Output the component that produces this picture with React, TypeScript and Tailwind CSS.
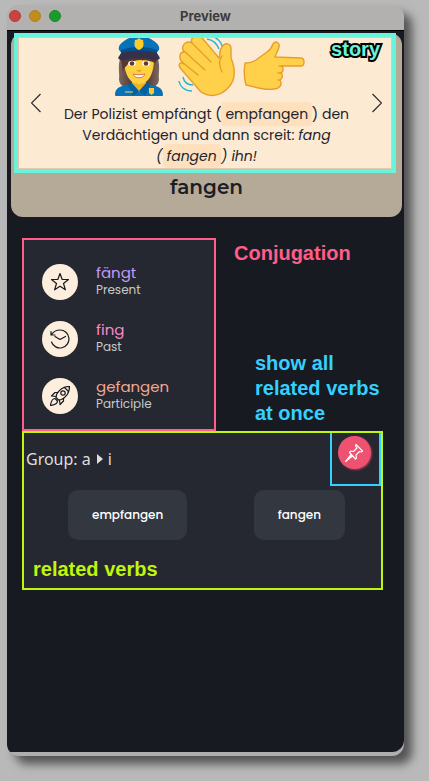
import React from "react";

const appFont = "font-['Poppins','Inter','Liberation_Sans',sans-serif]";
const noteFont = "font-['Liberation_Sans',Arial,sans-serif]";

function Policewoman() {
  return (
    <svg className="h-[60px] w-16 shrink-0" viewBox="-8 0 64 60" aria-label="police officer">
      <defs>
        <linearGradient id="hair" x1="0" x2="1">
          <stop offset="0" stopColor="#806861" />
          <stop offset=".25" stopColor="#5b443d" />
          <stop offset=".75" stopColor="#5b443d" />
          <stop offset="1" stopColor="#806861" />
        </linearGradient>
      </defs>
      <path d="M6 18C2 28 5 36 4 41c0 6 5 9 11 9h18c6 0 11-3 11-9-1-5 2-13-2-23z" fill="url(#hair)" />
      <path d="M17 40h14v9l-7 6-7-6z" fill="#f0b323" />
      <path d="M0 57c0-8 6-9 16-11l8 8 8-8c10 2 16 3 16 11 0 1-1 1-2 1H2c-1 0-2 0-2-1z" fill="#0872b8" />
      <path d="M16 44l8 9-6 5-5-11zM32 44l-8 9 6 5 5-11z" fill="#02609e" />
      <path d="M9 20c0 15 5 26 15 26s15-11 15-26z" fill="#ffd03f" />
      <path d="M6 20h36c0 3-2 7-4 4-8-3-20-3-25 2-2 3-5 4-5 8z" fill="#543930" />
      <path d="M4 9C4 6 13-2 24-2s20 8 20 11c1 3-1 4-3 6-10-4-24-4-34 0-2-2-4-3-3-6z" fill="#0872b8" />
      <path d="M6 12c10-4 26-4 36 0v4H6z" fill="#02508e" />
      <path d="M6 15c10-3 26-3 36 0l3 5c-3 4-6 2-10 1-7-1-15-1-22 0-4 1-7 3-10-1z" fill="#35314b" />
      <path d="M20 2c2 0 3-1 4-2 1 1 2 2 4 2 1 5 1 8-4 10-5-2-5-5-4-10z" fill="#ffcb28" />
      <path d="M14 22q4-2 7 0M27 22q3-2 7 0" fill="none" stroke="#543930" strokeWidth="1.2" />
      <ellipse cx="17" cy="25.500" rx="3.800" ry="2.800" fill="#fff" />
      <ellipse cx="31" cy="25.500" rx="3.800" ry="2.800" fill="#fff" />
      <circle cx="17" cy="25.500" r="2.300" fill="#5c3b37" />
      <circle cx="31" cy="25.500" r="2.300" fill="#5c3b37" />
      <path d="M22 32q2 2 4 0" fill="none" stroke="#e2a41d" strokeWidth="1.5" />
      <path d="M18 36c4 1 8 1 12 0-1 5-11 5-12 0z" fill="#fff" stroke="#d06a45" strokeWidth=".9" />
      <path d="M10 54h8" stroke="#ffd64a" strokeWidth="1.2" />
      <path d="M34 50h5v5l-2.500 2-2.500-2z" fill="#ffcb28" />
    </svg>
  );
}

function WavingHand() {
  return (
    <svg className="h-[60px] w-16 shrink-0" viewBox="0 0 64 60" aria-label="waving hand">
      <path
        d="M17 5C14-1 23-4 28 1l16 19c2-3-1-6 3-11 3-5 9-4 9 2v9c5 12 4 22-2 29-8 9-19 11-28 5L6 31c-4-5 0-8 3-5-6-5-5-12 0-12-4-6 2-12 8-9z"
        fill="#ffd04a"
        stroke="#e69f2b"
        strokeWidth="1.4"
        strokeLinejoin="round"
      />
      <path d="M17 5l19 19M9 13l21 19M7 24l16 13M47 18c-4 5-3 10 0 16" stroke="#e69f2b" strokeWidth="1.4" fill="none" strokeLinecap="round" />
      <path d="M8 39c1 5 5 8 10 8M4 43c1 6 6 10 13 10M32 1c6 1 10 5 12 10M39-1c4 2 7 5 8 9" fill="none" stroke="#1fb8d8" strokeWidth="1.4" />
    </svg>
  );
}

function PointingHand() {
  return (
    <svg className="h-[60px] w-16 shrink-0" viewBox="0 0 64 60" aria-label="pointing right">
      <path
        d="M2 25c5 0 8-1 11-3l11-8c3-2 5-5 6-8 3-4 7-1 6 3-1 4-3 7-4 10l26 1c4 0 4 8 0 8H39c2 3 1 6-1 7 2 2 2 5-1 7 3 5-1 9-6 9-9 2-18-2-28-4-2-7-2-16-1-22z"
        fill="#ffd04a"
        stroke="#e69f2b"
        strokeWidth="1.4"
        strokeLinejoin="round"
      />
      <path d="M39 28h-3M38 35h-3M37 42h-2" stroke="#e69f2b" strokeWidth="1.4" strokeLinecap="round" />
    </svg>
  );
}

const line = { fill: "none", stroke: "#171a21", strokeWidth: 1.2, strokeLinejoin: "round" as const, strokeLinecap: "round" as const };

function Star() {
  return (
    <svg className="h-5 w-5" viewBox="0 0 20 20" {...line}>
      <path d="M10 1.500l2.200 6h6.300l-5 4 1.900 6.300-5.400-3.600-5.400 3.600 1.900-6.300-5-4h6.300z" />
    </svg>
  );
}

function History() {
  return (
    <svg className="h-5 w-5" viewBox="0 0 20 20" {...line}>
      <path d="M1 2.500V6h4M1.500 5.500C3.500 2.500 6.500 1 10 1a9 9 0 1 1-8.500 12M5 7.500l5 3 5.500-3" />
    </svg>
  );
}

function Rocket() {
  return (
    <svg className="h-5 w-5" viewBox="0 0 20 20" {...line}>
      <path d="M19.500.5C14 .5 9.500 3 6.500 8.500l-.5 3L8.500 14l3-.5C17 10.500 19.500 6 19.500.5z" />
      <circle cx="13" cy="7" r="2.200" />
      <path d="M7.500 6.500H5L1.500 10l4.500.5M13.500 12.500V15L10 18.500 9.500 14M5 12.500c-3 0-4 3.500-4.500 7 3.500-.5 7-1.500 7-4.500zM14.500 1.500l4 4" />
    </svg>
  );
}

function Pin() {
  return (
    <svg className="h-5 w-5" viewBox="0 0 20 20" fill="none" stroke="#fff" strokeWidth="1.200" strokeLinejoin="round">
      <path d="M12 1.500l6.500 6.500-1 1-2-.5-3.500 3.500.5 3-1 1L5.500 9.500l1-1.500 3 .5L13 5l-1.500-2z" />
      <path d="M7 11.500l-5.500 7L8.500 13z" fill="#fff" />
    </svg>
  );
}

function Chevron({ flip = false }: { flip?: boolean }) {
  return (
    <svg className="h-5 w-[10px]" viewBox="0 0 10 20" fill="none" stroke="#2b2b2d" strokeWidth="1.200">
      <path d={flip ? "M.5 1l9 9-9 9" : "M9.500 1l-9 9 9 9"} />
    </svg>
  );
}

const forms = [
  { verb: "fängt", tense: "Present", color: "text-[#c69af5]", Icon: Star },
  { verb: "fing", tense: "Past", color: "text-[#f78cc8]", Icon: History },
  { verb: "gefangen", tense: "Participle", color: "text-[#f3a791]", Icon: Rocket },
];

function Term({ children }: { children: string }) {
  return <span className="-mx-1 rounded bg-[#ffe0bd] px-1 py-[2px]">{children}</span>;
}

export default function App() {
  return (
    <div className={`min-h-screen bg-[#b9b9b9] pt-[5px] pr-[25px] pb-[25px] pl-[7px] ${appFont}`}>
      <main className="flex min-h-[751px] flex-col overflow-hidden rounded-xl bg-[#b0aeac] pb-1 shadow-[8px_8px_10px_0px_rgba(0,0,0,0.55)]">
        <header className="relative flex h-[25px] shrink-0 items-center justify-center bg-[#b2b1af]">
          <div className="absolute left-[2px] flex gap-2 pb-[3px]">
            <button aria-label="Close" className="h-3 w-3 rounded-full border border-[#b73a35] bg-[#c9443f]" />
            <button aria-label="Minimize" className="h-3 w-3 rounded-full border border-[#b18019] bg-[#c18d1d]" />
            <button aria-label="Zoom" className="h-3 w-3 rounded-full border border-[#168b27] bg-[#189c2c]" />
          </div>
          <h1 className="pb-[3px] text-[13px] leading-4 font-bold text-[#3c3c3c] font-['Inter',sans-serif]">Preview</h1>
        </header>

        <div className="flex flex-1 flex-col rounded-br-xl rounded-bl border-t border-black bg-[#171a21] pt-[2px]">
          <section className="mr-[2px] ml-1 rounded-xl bg-[#b5a997] pb-4">
            <div className="relative mr-[6px] ml-[3px] h-[140px] border-4 border-[#66f4dc] bg-[#fdead3]">
              <div className="flex h-full items-center justify-between border border-[#e6c7ad] pr-[9px] pl-3">
                <button aria-label="Previous"><Chevron /></button>
                <div className="flex h-full flex-1 flex-col items-center">
                  <div className="flex gap-1">
                    <Policewoman />
                    <WavingHand />
                    <PointingHand />
                  </div>
                  <p className="w-[300px] pt-[6px] text-center text-sm leading-[21px] text-[#22242c]">
                    Der Polizist empfängt ( <Term>empfangen</Term> ) den<br />
                    Verdächtigen und dann screit: <em>fang<br />( <Term>fangen</Term> ) ihn!</em>
                  </p>
                </div>
                <button aria-label="Next"><Chevron flip /></button>
              </div>
              <span className={`absolute top-0 right-3 text-xl leading-6 font-bold text-[#66f4dc] [-webkit-text-stroke:4px_black] [paint-order:stroke_fill] ${noteFont}`}>story</span>
            </div>
            <h2 className="text-center text-xl leading-7 font-semibold text-[#1b1d25] font-['Montserrat','Poppins','Inter',sans-serif]">fangen</h2>
          </section>

          <div className="mt-[21px] mr-[21px] ml-[15px]">
            <div className="flex gap-[18px]">
              <section className="flex h-[193px] w-[194px] flex-col gap-[21px] border-2 border-[#ff5d8a] bg-[#252830] px-[18px] pt-6">
                {forms.map(({ verb, tense, color, Icon }) => (
                  <div key={verb} className="flex h-9 items-center gap-[18px]">
                    <div className="flex h-9 w-9 items-center justify-center rounded-full bg-[#fdeedd]"><Icon /></div>
                    <div className="pb-[2px]">
                      <div className={`text-[15px] leading-[18px] ${color}`}>{verb}</div>
                      <div className="text-xs leading-4 text-[#c7c8c9]">{tense}</div>
                    </div>
                  </div>
                ))}
              </section>
              <div className={`text-xl leading-6 font-bold ${noteFont}`}>
                <h3 className="pt-[3px] text-[#ff5d8a]">Conjugation</h3>
                <p className="pt-[86px] pl-[21px] leading-[25px] text-[#35d0ff]">show all<br />related verbs<br />at once</p>
              </div>
            </div>

            <section className="relative flex h-[159px] flex-col border-2 border-[#c0f60b] bg-[#252830]">
              <div className="flex h-[57px] items-center gap-[5px] pb-[6px] pl-[2px] text-base text-[#dedfdb] font-['Noto_Sans',sans-serif]">
                <span>Group: a</span>
                <svg className="h-3 w-[7px]" viewBox="0 0 7 12"><path d="M1 1l6 5-6 5z" fill="#dedfdb" /></svg>
                <span>i</span>
              </div>
              <div className="absolute top-0 right-0 flex h-[53px] w-[51px] justify-center border-2 border-t-0 border-[#35d0ff] pt-[3px] pr-[3px]">
                <button aria-label="Show all related verbs" className="flex h-[33px] w-[33px] items-center justify-center rounded-full bg-[#ef5270] shadow-[1px_1px_2px_#a83b51]"><Pin /></button>
              </div>
              <div className="flex justify-between pr-9 pl-11 text-xs font-medium text-white">
                <button className="h-[50px] rounded-[10px] bg-[#333740] px-6">empfangen</button>
                <button className="h-[50px] rounded-[10px] bg-[#333740] px-6">fangen</button>
              </div>
              <h3 className={`pt-[17px] pl-[9px] text-xl leading-6 font-bold text-[#c0f60b] ${noteFont}`}>related verbs</h3>
            </section>
          </div>
        </div>
      </main>
    </div>
  );
}
